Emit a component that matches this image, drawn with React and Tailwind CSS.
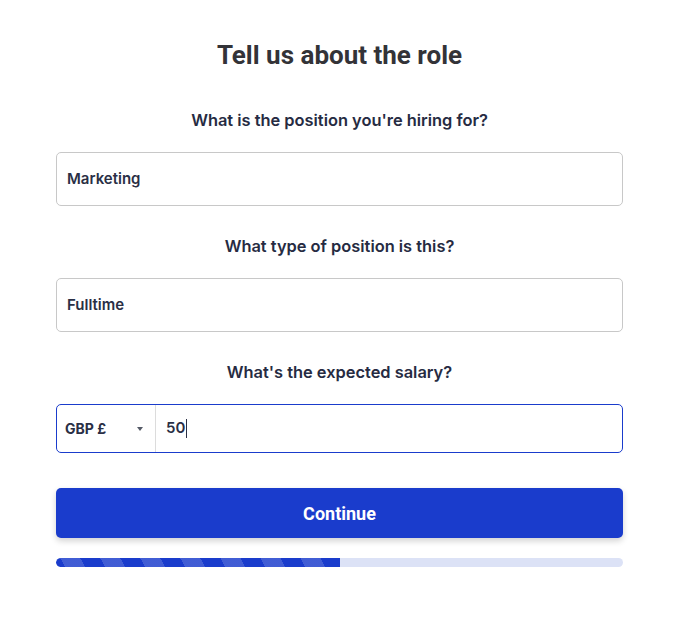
export default function App() {
  const label = "text-center text-[16.4px] leading-[24px] font-semibold text-[#262b42] font-['Inter',sans-serif]";
  return (
    <div className="min-h-[625px] w-[685px] bg-white">
      <div className="ml-[56px] w-[567px] pt-[38px] flex flex-col">
        <h1 className="text-center text-[26px] leading-[34px] font-bold text-[#333338] font-['Roboto',sans-serif]">
          Tell us about the role
        </h1>
        <div className={label + " mt-[36px]"}>What is the position you're hiring for?</div>
        <div className="mt-[20px] h-[54px] rounded-[5px] border border-[#c8c8c8] flex items-center px-[10px] text-[15px] font-semibold text-[#2a2f45] font-['Inter',sans-serif]">
          Marketing
        </div>
        <div className={label + " mt-[28px]"}>What type of position is this?</div>
        <div className="mt-[20px] h-[54px] rounded-[5px] border border-[#c8c8c8] flex items-center px-[10px] text-[15px] font-semibold text-[#2a2f45] font-['Inter',sans-serif]">
          Fulltime
        </div>
        <div className={label + " mt-[28px]"}>What's the expected salary?</div>
        <div className="mt-[20px] h-[49px] rounded-[5px] border border-[#1a3ccc] flex items-stretch font-['Inter',sans-serif]">
          <div className="w-[99px] flex items-center justify-between pl-[8px] pr-[12px] border-r border-[#dcdcdc]">
            <span className="text-[14px] font-bold text-[#2a2f45]">GBP £</span>
            <svg width="6" height="4" viewBox="0 0 6 4"><path d="M0 0 L6 0 L3 4 Z" fill="#555a66" /></svg>
          </div>
          <div className="flex items-center pl-[10px] text-[15px] font-semibold text-[#2a2f45]">
            <span>50</span>
            <span className="ml-[1px] w-[1px] h-[19px] bg-[#2a2f45]" />
          </div>
        </div>
        <button className="mt-[35px] h-[50px] rounded-[5px] bg-[#1a3ccc] text-white text-[18px] font-bold font-['Roboto',sans-serif] shadow-[0_3px_6px_rgba(0,0,0,0.18)]">
          Continue
        </button>
        <div className="mt-[20px] h-[9px] rounded-full bg-[#dce2f6] overflow-hidden">
          <div className="h-full w-[50%] rounded-l-full bg-[#1a3ccc] bg-[repeating-linear-gradient(61deg,transparent_0px,transparent_8px,rgba(255,255,255,0.17)_8px,rgba(255,255,255,0.17)_25.5px,transparent_25.5px,transparent_35px)]" />
        </div>
      </div>
    </div>
  );
}
